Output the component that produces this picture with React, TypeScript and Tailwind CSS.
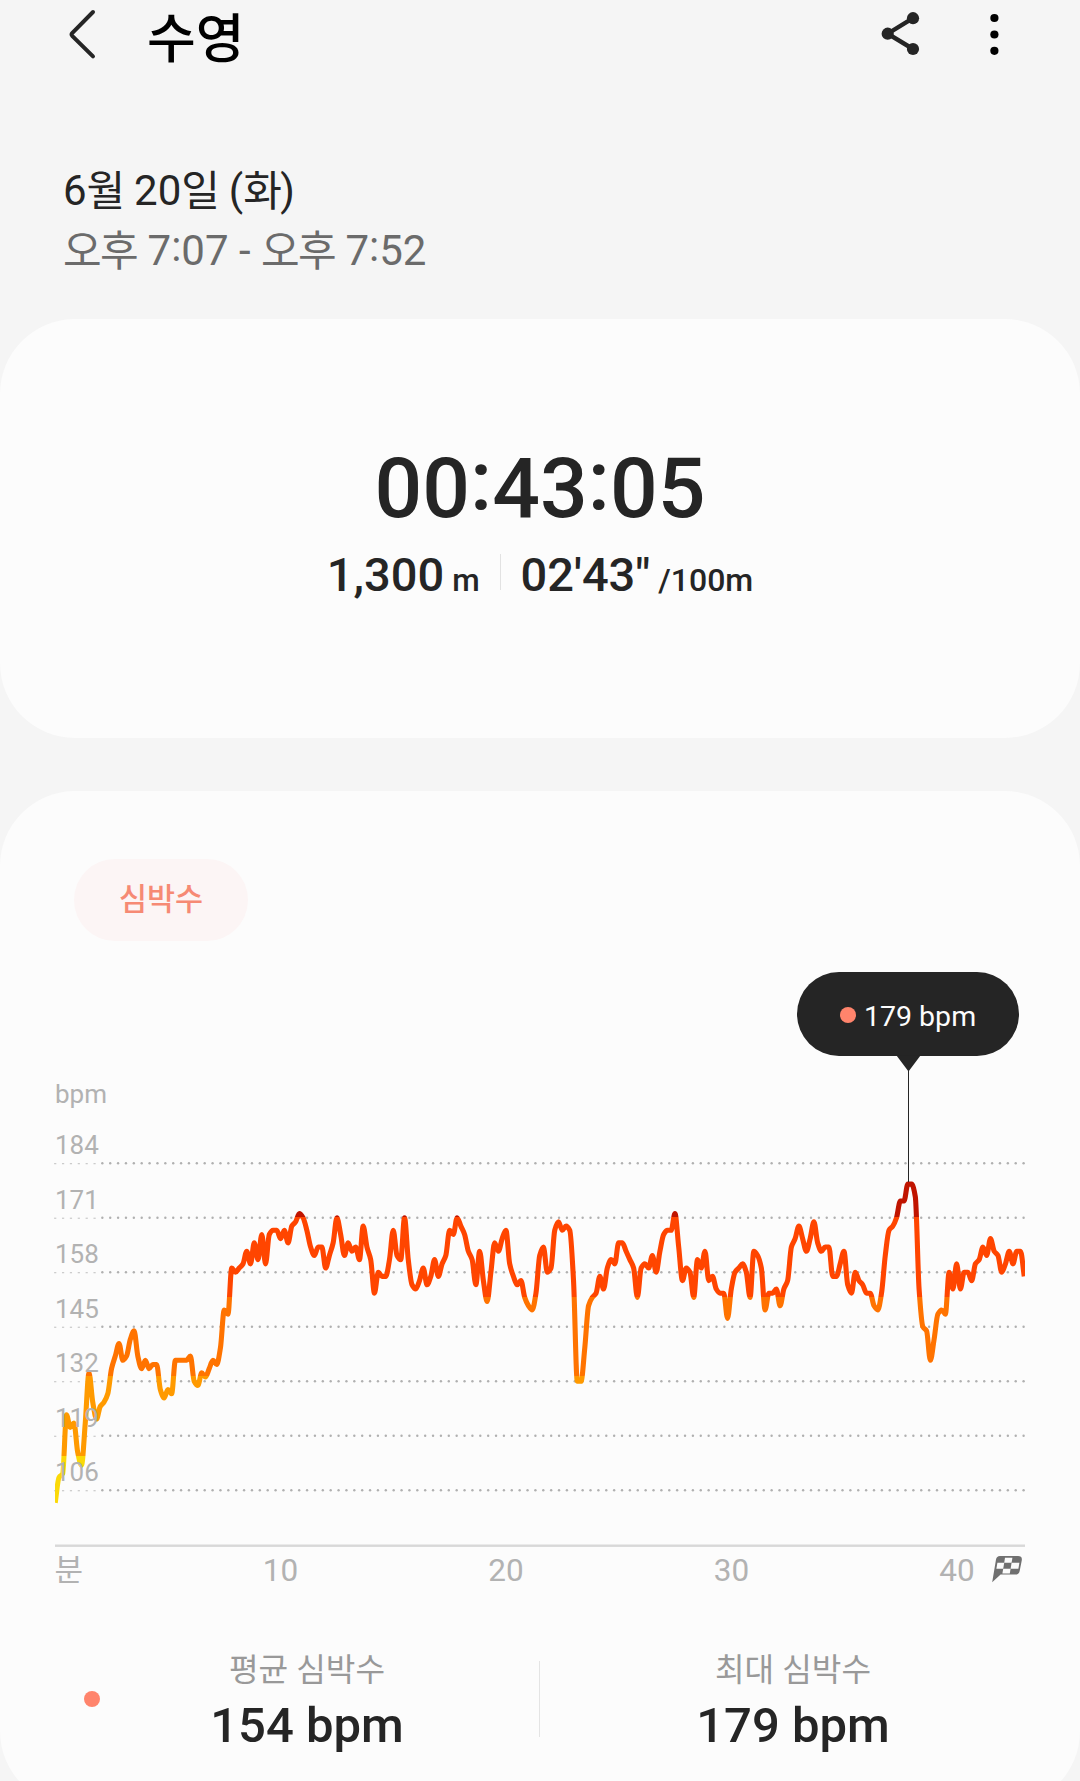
import type { ReactNode } from "react";

const FONT = "font-['Roboto','Noto_Sans_CJK_KR',sans-serif]";

/* Heart rate in bpm, one sample every ten seconds. */
const SAMPLES = [
  103, 109, 110, 124, 121, 122, 115, 112, 122, 134, 127, 123, 126, 127, 129, 135, 138, 141, 137, 138,
  142, 144, 138, 135, 137, 135, 136, 136, 130, 128, 130, 129, 137, 137, 137, 137, 138, 132, 131, 134,
  133, 135, 137, 136, 140, 149, 148, 159, 158, 159, 160, 163, 160, 165, 161, 167, 160, 167, 168, 168,
  166, 168, 165, 169, 170, 172, 171, 168, 164, 162, 164, 164, 159, 162, 165, 171, 167, 162, 165, 163,
  164, 161, 169, 164, 161, 153, 158, 157, 157, 161, 168, 162, 161, 171, 161, 155, 154, 156, 159, 155,
  157, 161, 157, 160, 162, 168, 167, 171, 169, 167, 163, 161, 155, 163, 156, 151, 158, 165, 163, 166,
  168, 160, 157, 155, 156, 152, 150, 149, 153, 162, 164, 158, 159, 168, 170, 168, 169, 168, 156, 132,
  132, 140, 150, 152, 153, 157, 154, 159, 161, 160, 165, 165, 163, 161, 159, 152, 159, 160, 159, 162,
  158, 163, 167, 168, 168, 172, 164, 156, 159, 158, 152, 161, 159, 163, 156, 157, 154, 153, 153, 147,
  154, 158, 159, 160, 158, 152, 163, 162, 159, 149, 153, 153, 154, 150, 154, 156, 164, 166, 169, 166,
  163, 166, 170, 165, 163, 164, 164, 157, 157, 160, 163, 155, 153, 158, 156, 155, 153, 153, 150, 149,
  153, 162, 168, 169, 171, 175, 175, 179, 179, 176, 154, 145, 144, 137, 142, 148, 149, 148, 158, 154,
  160, 154, 158, 158, 156, 160, 161, 164, 162, 166, 163, 162, 158, 160, 163, 160, 163, 163, 157,
];

const LEFT = 55.2;
const STEP = 3.756;
const px = (i: number) => LEFT + STEP * i;
const py = (bpm: number) => 83.2 + (184 - bpm) * 4.193;

/* Monotone cubic curve through the samples. */
function curve(values: number[]): string {
  const p = values.map((v, i) => [px(i), py(v)]);
  const n = p.length;
  const d = p.slice(1).map((q, i) => (q[1] - p[i][1]) / STEP);
  const m = p.map((_, i) => {
    if (i === 0) return d[0];
    if (i === n - 1) return d[n - 2];
    const a = d[i - 1];
    const b = d[i];
    return a * b <= 0 ? 0 : (2 * a * b) / (a + b);
  });
  let out = `M${p[0][0].toFixed(2)} ${p[0][1].toFixed(2)}`;
  for (let i = 0; i < n - 1; i++) {
    const h = STEP / 3;
    out += `C${(p[i][0] + h).toFixed(2)} ${(p[i][1] + m[i] * h).toFixed(2)} ${(p[i + 1][0] - h).toFixed(2)} ${(
      p[i + 1][1] -
      m[i + 1] * h
    ).toFixed(2)} ${p[i + 1][0].toFixed(2)} ${p[i + 1][1].toFixed(2)}`;
  }
  return out;
}

const LINE = curve(SAMPLES);
const LEVELS = [184, 171, 158, 145, 132, 119, 106];
const DOTS = Array.from({ length: 124 }, (_, i) => 55.1 + i * 7.874);

/* Zone boundaries, top to bottom. */
const ZONES = [
  { from: 0, to: 137, color: "#c01400" },
  { from: 137, to: 217, color: "#ff4500" },
  { from: 217, to: 296, color: "#ff7300" },
  { from: 296, to: 376, color: "#ff9a00" },
  { from: 376, to: 480, color: "#fbd908" },
];

function BackIcon() {
  return (
    <svg width="30" height="52" viewBox="0 0 30 52" fill="none" className="block">
      <path d="M26 4 L5.2 25 Q4 26.4 5.2 27.8 L26 48.4" stroke="#252525" strokeWidth="4" strokeLinecap="round" />
    </svg>
  );
}

function ShareIcon() {
  return (
    <svg width="40" height="44" viewBox="0 0 40 44" className="block">
      <path d="M33 6.2 L7.7 21.7 L33 37" fill="none" stroke="#252525" strokeWidth="4.4" />
      <circle cx="33" cy="6.2" r="6.1" fill="#252525" />
      <circle cx="7.7" cy="21.7" r="6.1" fill="#252525" />
      <circle cx="33" cy="37" r="6.1" fill="#252525" />
    </svg>
  );
}

function MoreIcon() {
  return (
    <svg width="10" height="44" viewBox="0 0 10 44" className="block">
      <circle cx="5.4" cy="5" r="4.1" />
      <circle cx="5.4" cy="21.5" r="4.1" />
      <circle cx="5.4" cy="37.8" r="4.1" />
    </svg>
  );
}

function HeartRateChart() {
  return (
    <svg width="1080" height="520" viewBox="0 0 1080 520" className="block">
      <defs>
        <linearGradient id="zones" gradientUnits="userSpaceOnUse" x1="0" y1="0" x2="0" y2="480">
          {ZONES.flatMap((z) => [
            <stop key={`${z.from}a`} offset={z.from / 480} stopColor={z.color} />,
            <stop key={`${z.from}b`} offset={z.to / 480} stopColor={z.color} />,
          ])}
        </linearGradient>
        <clipPath id="plot">
          <rect x="55" y="0" width="970" height="480" />
        </clipPath>
      </defs>

      {LEVELS.map((level) => (
        <g key={level} fill="#b0b0b0">
          {DOTS.map((x, i) =>
            i < 6 ? (
              <rect key={i} x={x - 1} y={py(level)} width="2.2" height="1" opacity="0.8" />
            ) : (
              <circle key={i} cx={x} cy={py(level)} r="1.2" />
            ),
          )}
        </g>
      ))}

      <rect x="55" y="464.5" width="970" height="2.4" fill="#d8d8d8" />
      <path
        d={LINE}
        fill="none"
        stroke="url(#zones)"
        strokeWidth="5.1"
        strokeLinejoin="round"
        clipPath="url(#plot)"
      />

      <g fill="#b2b2b2" fontSize="26">
        <text x="55" y="23">
          bpm
        </text>
        {LEVELS.map((level) => (
          <text key={level} x="55" y={py(level) - 9.2}>
            {level}
          </text>
        ))}
      </g>

      <g fill="#b2b2b2" fontSize="31.5">
        <text x="54.5" y="501" fontSize="31">
          분
        </text>
        {[10, 20, 30, 40].map((minute, i) => (
          <text key={minute} x={280.5 + i * 225.5} y="501" textAnchor="middle">
            {minute}
          </text>
        ))}
      </g>

      <g transform="translate(992 475.6)">
        <path
          d="M8 0.4 H26 Q30.4 0.4 29.8 4.6 L27.6 15.6 Q27 18.9 23.4 19 H8.6 L0.2 26.6 L4 4 Q4.6 0.6 8 0.4 Z"
          fill="#707070"
        />
        <g fill="#fcfcfc">
          <path d="M13 2.2 h7.4 l-0.8 4.9 h-7.4 z" />
          <path d="M5.4 7.1 h6.8 l-1 6.1 h-6.8 z" />
          <path d="M19.6 7.1 h7.8 l-1 6.1 h-7.8 z" />
          <path d="M11.2 13.2 h7.4 l-0.8 4.8 h-7.4 z" />
        </g>
      </g>
    </svg>
  );
}

function Tooltip() {
  return (
    <div className="absolute top-[181px] left-[797px] flex w-[222px] flex-col">
      <div className="flex h-[84px] items-center rounded-[42px] bg-[#252525] pl-[43px]">
        <span className="mt-[2px] h-4 w-4 rounded-full bg-[#ff846c]" />
        <span className="mt-[5px] ml-2 text-[28.5px] leading-[36px] text-[#fcfcfc]">179 bpm</span>
      </div>
      <svg width="222" height="128" viewBox="0 0 222 128" className="-mt-px block">
        <path d="M99.5 0.5 H123.5 L111.5 16.5 Z" fill="#252525" />
        <rect x="111" y="14" width="1" height="113" fill="#252525" />
      </svg>
    </div>
  );
}

/* Hangul set a little tighter than the digits around it. */
function Ko({ children }: { children: ReactNode }) {
  return <span className="relative top-px tracking-[-1.6px]">{children}</span>;
}

/* Colon centred on the height of the digits. */
function Colon() {
  return <span className="relative -top-[0.085em]">:</span>;
}

function Stat({ label, value }: { label: string; value: string }) {
  return (
    <div className="flex w-[380px] flex-col items-center">
      <div className="text-[32.2px] leading-[48px] text-[#999999]">{label}</div>
      <div className="text-[49px] leading-[64px] font-medium text-[#252525]">{value}</div>
    </div>
  );
}

export default function App() {
  return (
    <div className={`${FONT} h-[1781px] w-[1080px] overflow-hidden bg-[#f5f5f5] text-[#252525]`}>
      <header className="flex h-[160px] items-start pt-[8px] pl-[67px]">
        <BackIcon />
        <h1 className="-mt-[2px] ml-[50px] w-[733px] text-[53px] leading-[68px] font-medium text-black">수영</h1>
        <div className="mt-[4px]">
          <ShareIcon />
        </div>
        <div className="mt-[5px] ml-[69px]">
          <MoreIcon />
        </div>
      </header>

      <div className="h-[159px] pt-px pl-[63px] text-[42px] leading-[60px]">
        <div>
          6<Ko>월</Ko> 20<Ko>일</Ko> (<Ko>화</Ko>)
        </div>
        <div className="text-[#6b6b6b]">
          <Ko>오후</Ko> 7<Colon />
          07 - <Ko>오후</Ko> 7<Colon />
          52
        </div>
      </div>

      <section className="flex h-[419px] flex-col items-center rounded-[75px] bg-[#fcfcfc] pt-[120px] font-medium">
        <div className="text-[84px] leading-[100px]">
          00
          <Colon />
          43
          <Colon />
          05
        </div>
        <div className="mt-2 flex items-baseline text-[47px] leading-[56px]">
          <span>1,300</span>
          <span className="ml-2 text-[31.5px]">m</span>
          <span className="mx-5 mt-[7px] h-[36px] w-px self-start bg-[#e2e2e2]" />
          <span>02'43"</span>
          <span className="ml-2 text-[32px]">/100m</span>
        </div>
      </section>

      <section className="relative mt-[53px] h-[1015px] rounded-[75px] bg-[#fcfcfc] pt-[68px]">
        <div className="ml-[74px] flex h-[82px] w-[174px] items-center justify-center rounded-full bg-[#fcf5f5] text-[30.5px] font-medium text-[#f68a74]">
          심박수
        </div>
        <div className="mt-[139px]">
          <HeartRateChart />
        </div>
        <Tooltip />
        <div className="mt-[46px] flex items-start pl-[84px]">
          <span className="mt-[45px] h-4 w-4 rounded-full bg-[#ff846c]" />
          <div className="ml-[17px]">
            <Stat label="평균 심박수" value="154 bpm" />
          </div>
          <span className="mt-[15px] ml-[42px] h-[76px] w-px bg-[#e4e4e4]" />
          <div className="ml-[63px]">
            <Stat label="최대 심박수" value="179 bpm" />
          </div>
        </div>
      </section>
    </div>
  );
}
